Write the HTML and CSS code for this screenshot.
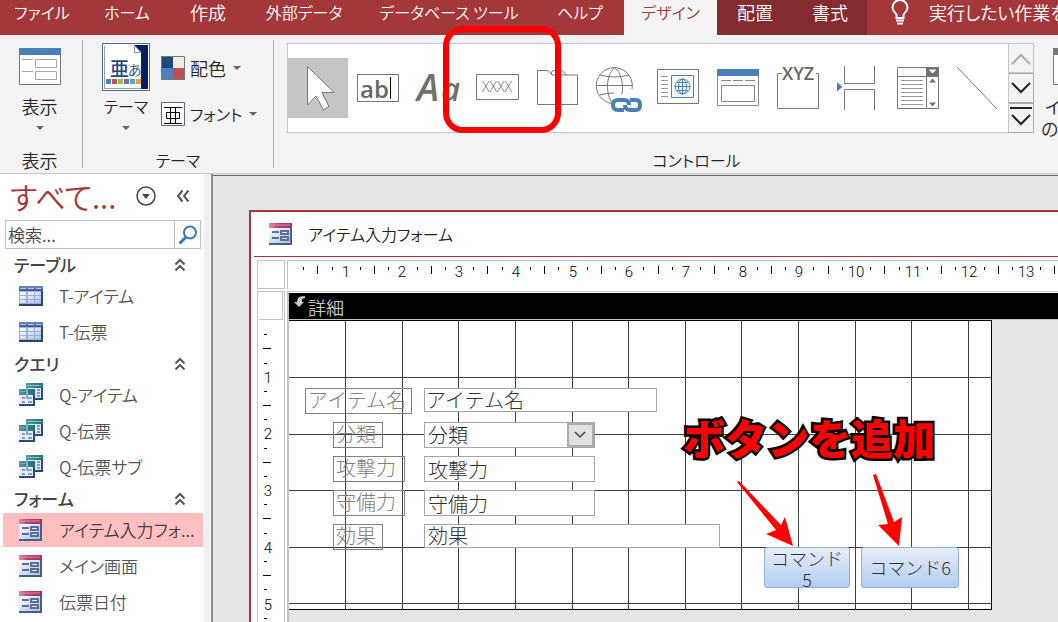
FILE: index.html
```html
<!DOCTYPE html>
<html lang="ja">
<head>
<meta charset="utf-8">
<title>アイテム入力フォーム</title>
<link rel="stylesheet" href="styles.css">
</head>
<body>
<svg class="defs" aria-hidden="true">
  <defs>
    <linearGradient id="blueHead" x2="0" y2="1"><stop offset="0" stop-color="#6d8cc4"/><stop offset="1" stop-color="#3d5a96"/></linearGradient>
    <linearGradient id="cell" x2="1" y2="1"><stop offset="0" stop-color="#ffffff"/><stop offset="1" stop-color="#a9c0ee"/></linearGradient>
    <linearGradient id="tealHead" x2="1"><stop offset="0" stop-color="#4f9a9d"/><stop offset="1" stop-color="#1f6f73"/></linearGradient>
    <linearGradient id="pinkHead" x2="1"><stop offset="0" stop-color="#d98aa8"/><stop offset=".4" stop-color="#b8406c"/><stop offset="1" stop-color="#a8305c"/></linearGradient>
    <symbol id="i-table" viewBox="0 0 24 20">
      <path fill="#2b4170" d="M0 0h24v20H0z"/><path fill="#9fb0cf" d="M0 5h22v13H0z"/>
      <path fill="url(#blueHead)" d="M0 0h24v5H0z"/><path stroke="#b4c6e8" d="M1 2.5h6M9 2.5h6M17 2.5h5"/>
      <path fill="url(#cell)" d="M1 6h6v3H1zM9 6h6v3H9zM16 6h6v3h-6zM1 10h6v3H1zM9 10h6v3H9zM16 10h6v3h-6zM1 14h6v3H1zM9 14h6v3H9zM16 14h6v3h-6z"/>
    </symbol>
    <symbol id="i-query" viewBox="0 0 24 24">
      <path fill="#2c4a73" d="M7 0h17v17H7z"/><path fill="#dfe9f7" d="M8 5h14v10H8z"/>
      <path fill="url(#tealHead)" d="M7 0h17v5H7z"/><path stroke="#8cc4c4" d="M8 2.5h14"/>
      <path stroke="#8a9ac0" stroke-width="2" d="M18 7h3M18 10h3M18 13h3"/>
      <path fill="#2c4a73" d="M0 6h16v17H0z"/><path fill="#e4ecf8" d="M0 12h14v9H0z"/>
      <path fill="url(#tealHead)" d="M0 6h16v6H0z"/><path stroke="#6fb0b2" d="M1 8.500h7"/><path fill="#8ca6cf" d="M7 5h2v10H7zM7 14h6v2H7z"/>
      <path stroke="#8a9ac0" stroke-width="2" d="M3 15h3M3 19h3M9 19h4"/>
    </symbol>
    <symbol id="i-form" viewBox="0 0 24 23">
      <path fill="#4a5f88" d="M0 0h23v22H0z"/><path fill="url(#cell)" d="M0 5h21v15H0z"/>
      <path fill="url(#pinkHead)" d="M0 0h23v5H0z"/><path stroke="#d98ba9" d="M1 2h20"/>
      <path stroke="#5d6e98" stroke-width="2" d="M3 9h7M3 15h7"/>
      <path fill="#5d6e98" d="M11 7h9v5h-9zM11 13h9v5h-9z"/><path stroke="#dfe8f8" d="M13 9.500h5M13 15.500h5"/>
    </symbol>
    <symbol id="i-collapse" viewBox="0 0 12 14"><path fill="none" stroke="#555" stroke-width="2" d="M1.500 6.500 6 2l4.500 4.500M1.500 12.500 6 8l4.500 4.500"/></symbol>
  </defs>
</svg>

<nav class="tabs">
  <button class="tab kana w84">ファイル</button>
  <button class="tab kana w86">ホーム</button>
  <button class="tab w76">作成</button>
  <button class="tab kana w116">外部データ</button>
  <button class="tab kana w174">データベース ツール</button>
  <button class="tab kana w88">ヘルプ</button>
  <button class="tab kana w93 selected">デザイン</button>
  <button class="tab w76 context">配置</button>
  <button class="tab w74 context">書式</button>
  <button class="tell">
    <svg width="18" height="26" viewBox="0 0 18 26" fill="none" stroke="#fff" stroke-width="2"><path d="M5.500 18v-3C5 12.500 1.500 11.500 1.500 7.500a7.500 7.500 0 0 1 15 0c0 4-3.500 5-4 7.500v3zM5 20.500h8M6 23.500h6"/></svg>
    <span>実行したい作業を入力してください</span>
  </button>
</nav>

<div class="ribbon">
  <section class="group view">
    <button class="big">
      <svg class="view-icon" width="42" height="48" viewBox="0 0 42 48"><path fill="#fff" stroke="#777" d="M.5 5.500h41v36H.5z"/><path fill="#4a80ba" d="M0 5h42v7H0z"/><path fill="none" stroke="#a6a6a6" d="M3 16.500h11M3 28.500h11M16.500 16.500h21v8h-21zM16.500 28.500h21v8h-21z"/></svg>
      <span>表示</span><i class="caret"></i>
    </button>
    <h2>表示</h2>
  </section>
  <section class="group theme">
    <div class="row">
      <button class="big">
        <svg width="48" height="48" viewBox="0 0 48 48"><path fill="#fff" stroke="#5b6b86" d="M.5 .5h47v47H.5z"/><path fill="#fff" stroke="#8fa3c4" d="M2.500 3v42.500h37"/><path fill="#002060" d="M32 2h14v44h-7V10z"/><path fill="#fff" stroke="#8295b8" d="M32.500 2.500v7H39z"/><text x="8" y="33" font-size="19" fill="#1f497d" font-weight="500">亜</text><text x="26" y="32" font-size="14" fill="#1f497d">あ</text><path fill="#4f81bd" d="M4 36h5v5H4z"/><path fill="#c0504d" d="M10 36h5v5h-5z"/><path fill="#9bbb59" d="M16 36h5v5h-5z"/><path fill="#8064a2" d="M22 36h5v5h-5z"/><path fill="#4bacc6" d="M28 36h5v5h-5z"/><path fill="#f79646" d="M34 36h5v5h-5z"/><path fill="#002060" d="M39 10h7v36h-7z"/></svg>
        <span class="kana">テーマ</span><i class="caret"></i>
      </button>
      <div class="stack">
        <button class="small"><svg width="24" height="24" viewBox="0 0 24 24"><path fill="#1f497d" d="M0 0h12v12H0z"/><path fill="#eeece1" d="M12 0h12v12H12z"/><path fill="#4f81bd" d="M0 12h12v12H0z"/><path fill="#c0504d" d="M12 12h12v12H12z"/><path fill="none" stroke="#777" d="M.5 .5h23v23H.5z"/></svg><span>配色</span><i class="caret"></i></button>
        <button class="small"><svg width="24" height="24" viewBox="0 0 24 24"><path fill="#fff" stroke="#5b6b86" d="M.5 .5h23v23H.5z"/><path fill="none" stroke="#000" d="M3 5.500h18M3 21.500h18M5.500 10.500h13v6h-13zM9.500 5v16M14.500 5v16"/></svg><span class="kana">フォント</span><i class="caret"></i></button>
      </div>
    </div>
    <h2 class="kana">テーマ</h2>
  </section>
  <section class="group controls">
    <div class="row">
      <div class="gallery">
        <button class="tool on" aria-label="選択"><svg viewBox="0 0 60 60"><path fill="#fff" stroke="#777" d="M19.500 8.500V47l8.500-9 7.500 14 5.500-3.500-7-14h12z"/></svg></button>
        <button class="tool" aria-label="テキスト ボックス"><svg viewBox="0 0 60 60"><path fill="#fff" stroke="#777" d="M9.500 16.500h41v27h-41z"/><text x="12" y="40" font-size="24" font-weight="600" fill="#666">ab</text><path stroke="#000" d="M42.500 19v22"/></svg></button>
        <button class="tool" aria-label="ラベル"><svg viewBox="0 0 60 60"><g fill="#707070" font-weight="600" font-style="italic"><text x="9" y="43" font-size="37">A</text><text x="33" y="43" font-size="33">a</text></g></svg></button>
        <button class="tool marked" aria-label="ボタン"><svg viewBox="0 0 60 60"><path fill="#fff" stroke="#777" d="M8.500 16.500h42v25h-42z"/><text x="14" y="34" font-size="14" fill="#666">XXXX</text></svg></button>
        <button class="tool" aria-label="タブ"><svg viewBox="0 0 60 60" fill="none" stroke="#777"><path d="M9.500 12.500H20l4 4.500h25.500v29.500h-40zM23.500 17v-2q0-2.500 2.500-2.500h8l4.500 4.500"/></svg></button>
        <button class="tool" aria-label="リンク"><svg viewBox="0 0 60 60" fill="none" stroke="#777"><path d="M24 45.500A18 18 0 1 1 44 31M8.500 27.500h36M12 17q14 4 29 0M12 37q6-2 14-2M26.500 9.500c-9 9-9 26-2 36M26.500 9.500c7 6 9 16 7.500 27"/><g stroke="#4a80ba" stroke-width="4"><path d="M36 52h-6q-5 0-5-5t5-5h6q5 0 5 5"/><path d="M42 42h6q4 0 4 5t-4 5h-6q-5 0-5-5"/></g></svg></button>
        <button class="tool" aria-label="Web ブラウザー"><svg viewBox="0 0 60 60" fill="none" stroke="#777"><path d="M9.500 11.500h41v34h-41z"/><path stroke="#999" d="M13 18.500h7M13 22.500h7M13 26.500h7M13 30.500h7M13 34.500h7M13 38.500h7"/><g stroke="#4a80ba"><path d="M23.500 17.500h22v22h-22zM27 28.500h15M29 24.500h11M29 32.500h11M34.500 21v15"/><circle cx="34.500" cy="28.500" r="7.500"/><ellipse cx="34.500" cy="28.500" rx="4" ry="7.500"/></g></svg></button>
        <button class="tool" aria-label="ナビゲーション"><svg viewBox="0 0 60 60" fill="none" stroke="#888"><path d="M9.500 11.500h41v36h-41z"/><path fill="#4a80ba" stroke="none" d="M9 11h42v7H9z"/><path d="M13 22.500h10M25 22.500h10M37 22.500h10M13.500 27.500h33v16h-33z"/></svg></button>
        <button class="tool" aria-label="オプション グループ"><svg viewBox="0 0 60 60"><path fill="none" stroke="#777" d="M14 15.500H9.500v35h41v-35H48"/><text x="14" y="22" font-size="18" font-weight="600" fill="#666">XYZ</text></svg></button>
        <button class="tool" aria-label="改ページ"><svg viewBox="0 0 60 60"><path fill="none" stroke="#777" d="M16.500 8v17.500h30V8M16.500 52V31.500h30V52"/><path fill="#4a80ba" d="M9 24v9.500l5.500-4.500z"/></svg></button>
        <button class="tool" aria-label="コンボ ボックス"><svg viewBox="0 0 60 60"><path fill="#707070" d="M38 9h13v10H38z"/><path fill="none" stroke="#777" d="M9.500 9.500h41v41h-41zM9.500 18.500h41M38.500 10v40"/><path stroke="#999" d="M13 22.500h22M13 26.500h22M13 30.500h22M13 34.500h22M13 38.500h22M13 42.500h22M13 46.500h22"/><path fill="#fff" d="M40.500 11.500h8l-4 4z"/><path fill="#707070" d="M41 24.500h7l-3.500-4zM41 44.500h7l-3.500 4z"/></svg></button>
        <button class="tool" aria-label="直線"><svg viewBox="0 0 60 60"><path stroke="#777" d="M9.500 9.500 49 51"/></svg></button>
      </div>
      <div class="scroller">
        <button class="dim" aria-label="前の行"><svg viewBox="0 0 24 28"><path d="m3 20 9-9 9 9"/></svg></button>
        <button aria-label="次の行"><svg viewBox="0 0 24 28"><path d="m3 9 9 9 9-9"/></svg></button>
        <button aria-label="その他"><svg viewBox="0 0 24 28"><path d="M1 4h22M3 11l9 9 9-9"/></svg></button>
      </div>
    </div>
    <h2 class="kana">コントロール</h2>
  </section>
  <section class="group image">
    <button class="big">
      <svg width="42" height="48" viewBox="0 0 42 48"><path fill="#fff" stroke="#777" d="M.5 5.500h41v36H.5z"/><path fill="#777" d="M0 5h42v7H0z"/></svg>
      <span>イメージ</span><span>の挿入</span>
    </button>
  </section>
</div>

<main class="main">
  <aside class="nav">
    <header class="nav-head">
      <h1>すべて...</h1>
      <button aria-label="カテゴリ"><svg width="20" height="20" viewBox="0 0 20 20"><circle cx="10" cy="10" r="9" fill="none" stroke="#444" stroke-width="1.500"/><path fill="#444" d="M6 8h8l-4 5z"/></svg></button>
      <button aria-label="閉じる"><svg width="14" height="14" viewBox="0 0 14 14"><path fill="none" stroke="#555" stroke-width="2" d="M6.500 1.500 2 7l4.500 5.500M12.500 1.500 8 7l4.500 5.500"/></svg></button>
    </header>
    <form class="search">
      <input type="search" placeholder="検索..." aria-label="検索">
      <button type="button" aria-label="検索を実行"><svg width="20" height="20" viewBox="0 0 20 20"><circle cx="12" cy="7.500" r="6" fill="none" stroke="#3f78b5" stroke-width="2"/><path stroke="#3f78b5" stroke-width="3" d="m8 12-6.500 6.500"/></svg></button>
    </form>
    <h3>テーブル<svg width="12" height="14"><use href="#i-collapse"/></svg></h3>
    <ul>
      <li><a href="#"><svg height="20"><use href="#i-table"/></svg><span>T-アイテム</span></a></li>
      <li><a href="#"><svg height="20"><use href="#i-table"/></svg><span>T-伝票</span></a></li>
    </ul>
    <h3>クエリ<svg width="12" height="14"><use href="#i-collapse"/></svg></h3>
    <ul>
      <li><a href="#"><svg height="24"><use href="#i-query"/></svg><span>Q-アイテム</span></a></li>
      <li><a href="#"><svg height="24"><use href="#i-query"/></svg><span>Q-伝票</span></a></li>
      <li><a href="#"><svg height="24"><use href="#i-query"/></svg><span>Q-伝票サブ</span></a></li>
    </ul>
    <h3>フォーム<svg width="12" height="14"><use href="#i-collapse"/></svg></h3>
    <ul>
      <li><a href="#" class="current"><svg height="23"><use href="#i-form"/></svg><span>アイテム入力フォ...</span></a></li>
      <li><a href="#"><svg height="23"><use href="#i-form"/></svg><span>メイン画面</span></a></li>
      <li><a href="#"><svg height="23"><use href="#i-form"/></svg><span>伝票日付</span></a></li>
    </ul>
  </aside>
  <div class="workspace">
    <div class="window">
      <div class="title"><svg width="24" height="23"><use href="#i-form"/></svg><span class="kana">アイテム入力フォーム</span></div>
      <div class="designer">
        <div class="corner"></div>
        <div class="ruler-x"><svg id="rulerX" height="26"></svg></div>
        <div class="ruler-y"><div class="selector"></div><svg id="rulerY" width="26"></svg></div>
        <div class="sections">
          <div class="section-bar"><svg width="12" height="12" viewBox="0 0 12 12"><path fill="#c8c8c8" d="M11 0v2L8 3v3h2L5 11 0 6h3Q3 1 7 .5z"/></svg><span>詳細</span></div>
          <div class="canvas">
            <svg class="grid" id="grid"></svg>
            <label class="lbl r1" for="f1">アイテム名</label><input class="fld r1 wide" id="f1" value="アイテム名">
            <label class="lbl r2 two" for="f2">分類</label>
            <div class="combo r2"><select id="f2"><option>分類</option></select><svg width="27" height="24" viewBox="0 0 27 24"><path fill="#e1e1e1" stroke="#adadad" stroke-width="2" d="M1 1h25v22H1z"/><path fill="none" stroke="#444" stroke-width="1.500" d="m8 9 5 5 5-5"/></svg></div>
            <label class="lbl r3 three" for="f3">攻撃力</label><input class="fld r3" id="f3" value="攻撃力">
            <label class="lbl r4 three" for="f4">守備力</label><input class="fld r4" id="f4" value="守備力">
            <label class="lbl r5 two" for="f5">効果</label><input class="fld r5 full" id="f5" value="効果">
            <button class="cmd c5">コマンド5</button>
            <button class="cmd c6">コマンド6</button>
            <p class="note">ボタンを追加</p>
            <svg class="arrows" viewBox="0 0 703 289"><path fill="#f00" d="m448 161 2-1 42 44 4-8 8 29-27-12 10-4zM584 154l3-1 18 48 8-5-3 29-21-21 10-1z"/></svg>
          </div>
        </div>
      </div>
    </div>
  </div>
</main>
<script src="rulers.js"></script>
</body>
</html>
```
FILE: styles.css
```css
*, *::after { box-sizing: border-box; }
body {
  margin: 0; height: 100vh; overflow: hidden;
  display: flex; flex-direction: column;
  font: 350 18px/26px "Noto Sans CJK JP", sans-serif;
  font-feature-settings: "palt";
  color: #333; background: #e5e5e5;
}
button { font: inherit; font-feature-settings: inherit; color: inherit; border: 0; padding: 0; background: none; }
h1, h2, h3, ul, p { margin: 0; padding: 0; font-weight: inherit; }
ul { list-style: none; }
svg { display: block; flex: none; }
.defs { position: absolute; width: 0; height: 0; }

/* tab strip */
.tabs { display: flex; height: 35px; flex: none; background: #a4373a; color: #fff; overflow: hidden; line-height: 24px; }
.tab { flex: none; display: flex; justify-content: center; height: 35px; white-space: nowrap; }
.w74 { width: 74px; } .w76 { width: 76px; } .w84 { width: 84px; } .w86 { width: 86px; }
.w88 { width: 88px; } .w93 { width: 93px; } .w116 { width: 116px; } .w174 { width: 174px; }
.selected { background: #f3f3f3; color: #a4373a; }
.context { background: #832c2f; }
.tell { display: flex; flex: 1; min-width: 0; gap: 20px; padding-left: 24px; white-space: nowrap; height: 26px; overflow: hidden; }

/* ribbon */
.ribbon { display: flex; height: 139px; flex: none; background: #f3f3f3; border-bottom: 1px solid #c8c8c8; color: #262626; }
.group { flex: none; display: flex; flex-direction: column; justify-content: space-between; position: relative; padding-top: 8px; }
.group h2 { font-size: 18px; line-height: 26px; text-align: center; }
.kana, .group h2.kana { font-size: 16px; }
.view, .theme { margin: 5px 0; padding-top: 3px; border-right: 1px solid #adadad; }
.view h2, .theme h2 { line-height: 16px; }
.view { width: 83px; padding-right: 3px; }
.theme { width: 191px; }
.row { display: flex; }
.theme .row { padding-left: 19px; gap: 11px; }
.big { display: flex; flex-direction: column; align-items: center; line-height: 22px; white-space: nowrap; }
.big span:first-of-type { margin-top: 4px; }
.big .caret { margin-top: 9px; }
.caret { border: 4px solid transparent; border-top-color: #666; border-bottom: 0; }
.stack { display: flex; flex-direction: column; gap: 20px; padding-top: 12px; }
.small { display: flex; align-items: center; gap: 5px; height: 26px; white-space: nowrap; }
.small .caret { margin-left: 2px; }
.controls { padding-left: 13px; }
.controls h2 { padding-left: 72px; }
.gallery { display: flex; align-items: center; height: 90px; background: #fff; border: 1px solid #c8c8c8; }
.tool { width: 60px; height: 60px; position: relative; }
.tool svg { width: 60px; height: 60px; }
.tool text { font-family: "Open Sans", sans-serif; }
.on { background: #c5c5c5; }
.marked::after { content: ""; position: absolute; left: -25px; top: -32px; width: 118px; height: 107px; border: 6px solid #f00; border-radius: 20px; z-index: 2; }
.scroller { width: 25px; display: flex; flex-direction: column; }
.scroller button { height: 30px; border: 1px solid #ababab; border-left-width: 0; flex: 1; }
.scroller .dim { border-color: #c8c8c8; }
.scroller svg { width: 24px; height: 28px; fill: none; stroke: #222; stroke-width: 2; }
.scroller .dim svg { stroke: #b0b0b0; }
.image { flex: 1; min-width: 0; padding-left: 7px; overflow: hidden; justify-content: flex-start; }
.image .big { align-items: flex-start; }
.image .big svg { margin-left: 12px; }
.image .big span:first-of-type { margin-left: 4px; }

/* navigation pane */
.main { flex: 1; display: flex; min-height: 0; }
.nav { width: 213px; flex: none; background: #fff; border-right: 2px solid #8f8f8f; box-shadow: inset -7px 0 #eff0f3; padding-right: 7px; overflow: hidden; color: #555; font-size: 17px; }
.nav-head { display: flex; align-items: center; height: 44px; padding: 0 15px 0 10px; gap: 20px; }
.nav-head h1 { flex: 1; color: #a4373a; font-size: 30px; line-height: 40px; white-space: nowrap; }
.search { display: flex; height: 29px; margin: 2px 3px 2px 5px; border: 1px solid #c0c0c0; }
.search input { flex: 1; min-width: 0; border: 0; outline: 0; padding: 0 2px; font: inherit; line-height: 24px; background: none; }
.search input::placeholder { color: #444; }
.search button { width: 26px; border-left: 1px solid #c0c0c0; display: grid; place-items: center; }
.nav h3 { display: flex; justify-content: space-between; align-items: center; height: 27px; padding: 0 18px 0 14px; font-size: 17px; font-weight: 500; color: #444; }
.nav a { display: flex; align-items: center; gap: 16px; height: 34px; margin: 1px 1px 1px 3px; padding: 0 2px 0 16px; color: inherit; text-decoration: none; }
.nav li { display: flow-root; }
.nav a svg { width: 24px; }
.nav a span { white-space: nowrap; }
.nav .current { background: #ffbfc1; color: #444; }

/* form window */
.workspace { flex: 1; min-width: 0; display: flex; margin-top: 1px; padding: 34px 0 0 36px; background: #e5e5e5; border-top: 1px solid #6b6b6b; overflow: hidden; }
.window { flex: 1; min-width: 0; display: flex; flex-direction: column; background: #fff; border: solid #a4373a; border-width: 2px 0 0 2px; }
.title { display: flex; align-items: center; gap: 15px; height: 45px; margin-left: 3px; padding-left: 15px; border-bottom: 1px solid #a4373a; color: #222; }
.designer { flex: 1; min-height: 0; display: grid; grid-template: 29px 1fr / 28px 1fr; gap: 2px; padding: 3px 0 0 6px; }
.corner, .ruler-x, .ruler-y { border: 1px solid #c3c3c3; overflow: hidden; }
.ruler-x { border-width: 1px 0 0 1px; }
.ruler-x svg { width: 100%; }
.ruler-y { border-bottom: 0; display: flex; flex-direction: column; min-height: 0; }
.ruler-y svg { flex: 1; }
.selector { height: 28px; margin: 0 1px 1px; border: solid #c3c3c3; border-width: 0 1px 1px 0; flex: none; }
.ruler-x text, .ruler-y text { font: 300 15px Roboto, sans-serif; fill: #000; text-anchor: middle; }
.sections { min-width: 0; min-height: 0; border: solid #c3c3c3; border-width: 1px 0 0 2px; background: #e5e5e5; overflow: hidden; }
.section-bar { display: flex; gap: 2px; height: 28px; padding: 3px 0 0 5px; background: #000; color: #c8c8c8; border-top: 1px solid #fff; border-bottom: 1px solid #c3c3c3; line-height: 22px; }
.canvas { position: relative; width: 703px; height: 290px; background: #fff; border: solid #000; border-width: 1px 1px 1px 0; font-weight: 300; font-feature-settings: normal; color: #333; }
.grid, .arrows { position: absolute; left: 0; top: 0; width: 702px; height: 288px; }
.arrows { width: 703px; height: 289px; }
.lbl, .fld, .combo, .cmd, .note { position: absolute; }
.lbl { left: 44px; height: 26px; border: 1px solid #808080; color: #808080; font-size: 20px; line-height: 22px; padding-left: 2px; white-space: nowrap; }
.lbl.r1 { left: 16px; width: 107px; }
.two { width: 50px; }
.three { width: 72px; }
.r1 { top: 67px; } .r2 { top: 101px; } .r3 { top: 135px; } .r4 { top: 169px; } .r5 { top: 203px; }
.fld, .combo { left: 135px; width: 171px; height: 26px; border: 1px solid #a5a5a5; background: #fff; }
.fld, .combo select { font: 300 20px/24px "Noto Sans CJK JP", sans-serif; color: #333; padding: 0 0 0 3px; border-radius: 0; outline: 0; }
.fld.wide { width: 233px; height: 24px; padding-left: 1px; }
.fld.full { width: 296px; height: 24px; }
.combo { display: flex; }
.combo select { flex: 1; appearance: none; border: 0; background: none; color: #12294a; }
.cmd { top: 226px; height: 41px; padding: 0 4px; border: 1px solid #8fb0d9; border-radius: 3px; background: linear-gradient(#e6edf9, #b3cdef); font-size: 18px; line-height: 21px; overflow: hidden; }
.c5 { left: 475px; width: 86px; }
.c6 { left: 572px; width: 98px; }
.note { left: 394px; top: 86px; font-size: 42px; line-height: 60px; font-weight: 900; color: #f00; -webkit-text-stroke: 5px #000; paint-order: stroke fill; white-space: nowrap; }
```
FILE: rulers.js
```js
// One ruler unit (1 cm) in pixels.
const CM = 56.7;
const NS = "http://www.w3.org/2000/svg";

function add(svg, tag, attrs, text) {
  const el = document.createElementNS(NS, tag);
  for (const key in attrs) el.setAttribute(key, attrs[key]);
  if (text) el.textContent = text;
  svg.appendChild(el);
}

function ruler(svg, count, vertical, origin) {
  let d = "";
  for (let i = 0; i < count * 4; i++) {
    const pos = Math.round(origin + i * CM / 4);
    if (i % 4 === 0) {
      if (i) add(svg, "text", vertical ? { x: 10, y: pos + 6 } : { x: pos, y: 16 }, String(i / 4));
      continue;
    }
    const p = pos + 0.5;
    const tall = i % 4 === 2;
    if (vertical) d += tall ? `M5 ${p}h8` : `M6 ${p}h3`;
    else d += tall ? `M${p} 5v8` : `M${p} 6v3`;
  }
  add(svg, "path", { d, stroke: "#000" });
}

ruler(document.getElementById("rulerX"), 14, false, 1);
ruler(document.getElementById("rulerY"), 7, true, -1);

let lines = "";
for (let i = 1; i <= 12; i++) lines += `M${Math.floor(i * 56.6) + 0.5} 0v288`;
for (let i = 1; i <= 5; i++) lines += `M0 ${Math.floor(i * 56.5) + 0.5}h702`;
add(document.getElementById("grid"), "path", { d: lines, stroke: "#404040" });
```
